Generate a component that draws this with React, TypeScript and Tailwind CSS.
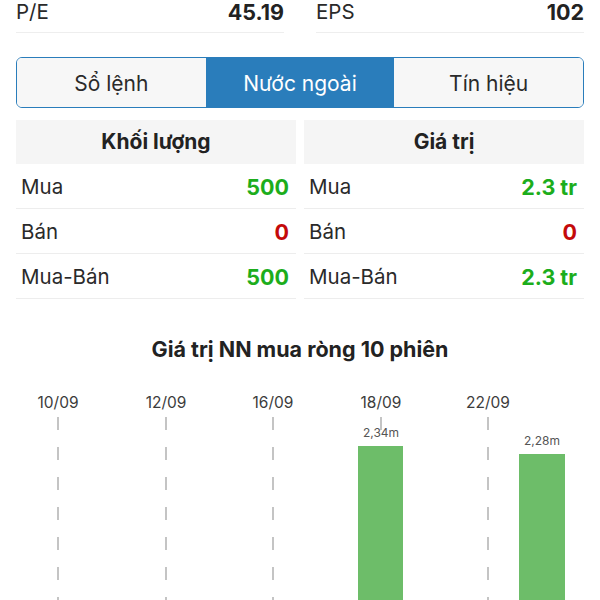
import React from 'react';

const font = { fontFamily: 'Inter, "Noto Sans", sans-serif' };

interface StatRow {
  label: string;
  value: string;
  tone: 'up' | 'down';
}

function StatTable({ title, rows }: { title: string; rows: StatRow[] }) {
  return (
    <div className="flex flex-col">
      <div className="h-[44px] bg-[#f5f5f5] flex items-center justify-center text-[21px] font-bold text-[#222]">
        {title}
      </div>
      {rows.map((r) => (
        <div key={r.label} className="h-[45px] pt-[3px] flex items-center justify-between border-b border-[#ededed] pl-[5px] pr-[7px]">
          <span className="text-[20.5px] text-[#2a2a2a]">{r.label}</span>
          <span className={`text-[21.5px] font-bold ${r.tone === 'up' ? 'text-[#1cad1c]' : 'text-[#c40a0a]'}`}>{r.value}</span>
        </div>
      ))}
    </div>
  );
}

const dates = [
  { x: 58, label: '10/09' },
  { x: 166, label: '12/09' },
  { x: 273, label: '16/09' },
  { x: 381, label: '18/09' },
  { x: 488, label: '22/09' },
];

function NetBuyChart() {
  return (
    <svg width={600} height={236} viewBox="0 0 600 236" className="block">
      {dates.map((d) => (
        <g key={d.label}>
          <text x={d.x} y={44} textAnchor="middle" fontSize={15.5} fill="#3c3c3c" fontFamily="Inter, sans-serif">
            {d.label}
          </text>
          <line x1={d.x} y1={53} x2={d.x} y2={236} stroke="#c4c4c4" strokeWidth={2} strokeDasharray="13 17" />
        </g>
      ))}
      {/* bars */}
      <rect x={358} y={82} width={45} height={160} fill="#6dbd69" />
      <text x={381} y={73} textAnchor="middle" fontSize={12} fill="#555" fontFamily="Inter, sans-serif">2,34m</text>
      <rect x={519} y={90} width={46} height={150} fill="#6dbd69" />
      <text x={542} y={81} textAnchor="middle" fontSize={12} fill="#555" fontFamily="Inter, sans-serif">2,28m</text>
    </svg>
  );
}

export default function App() {
  const tabs = ['Sổ lệnh', 'Nước ngoài', 'Tín hiệu'];
  const active = 1;

  return (
    <div className="w-[600px] h-[600px] overflow-hidden bg-white" style={font}>
      {/* P/E, EPS */}
      <div className="px-4 grid grid-cols-2 gap-8">
        <div className="h-[33px] pt-[2px] flex items-start justify-between border-b border-[#eeeeee] leading-none">
          <span className="text-[20.5px] text-[#2a2a2a]">P/E</span>
          <span className="text-[21.5px] font-bold text-[#222]">45.19</span>
        </div>
        <div className="h-[33px] pt-[2px] flex items-start justify-between border-b border-[#eeeeee] leading-none">
          <span className="text-[20.5px] text-[#2a2a2a]">EPS</span>
          <span className="text-[21.5px] font-bold text-[#222]">102</span>
        </div>
      </div>

      {/* Tabs */}
      <div className="mx-4 mt-[24px] h-[51px] grid grid-cols-3 rounded-md border-[1.5px] border-[#2a7dbb] overflow-hidden">
        {tabs.map((t, i) => (
          <div
            key={t}
            className={`pt-[2px] flex items-center justify-center text-[21px] ${
              i === active ? 'bg-[#2a7dbb] text-white' : 'bg-[#f7f7f7] text-[#2a2a2a]'
            }`}
          >
            {t}
          </div>
        ))}
      </div>

      {/* Khối lượng / Giá trị */}
      <div className="mx-4 mt-[12px] grid grid-cols-2 gap-2">
        <StatTable
          title="Khối lượng"
          rows={[
            { label: 'Mua', value: '500', tone: 'up' },
            { label: 'Bán', value: '0', tone: 'down' },
            { label: 'Mua-Bán', value: '500', tone: 'up' },
          ]}
        />
        <StatTable
          title="Giá trị"
          rows={[
            { label: 'Mua', value: '2.3 tr', tone: 'up' },
            { label: 'Bán', value: '0', tone: 'down' },
            { label: 'Mua-Bán', value: '2.3 tr', tone: 'up' },
          ]}
        />
      </div>

      {/* Chart */}
      <div className="mt-[35px] h-[30px] flex items-center justify-center text-[21.5px] font-bold text-[#222]">
        Giá trị NN mua ròng 10 phiên
      </div>
      <NetBuyChart />
    </div>
  );
}
